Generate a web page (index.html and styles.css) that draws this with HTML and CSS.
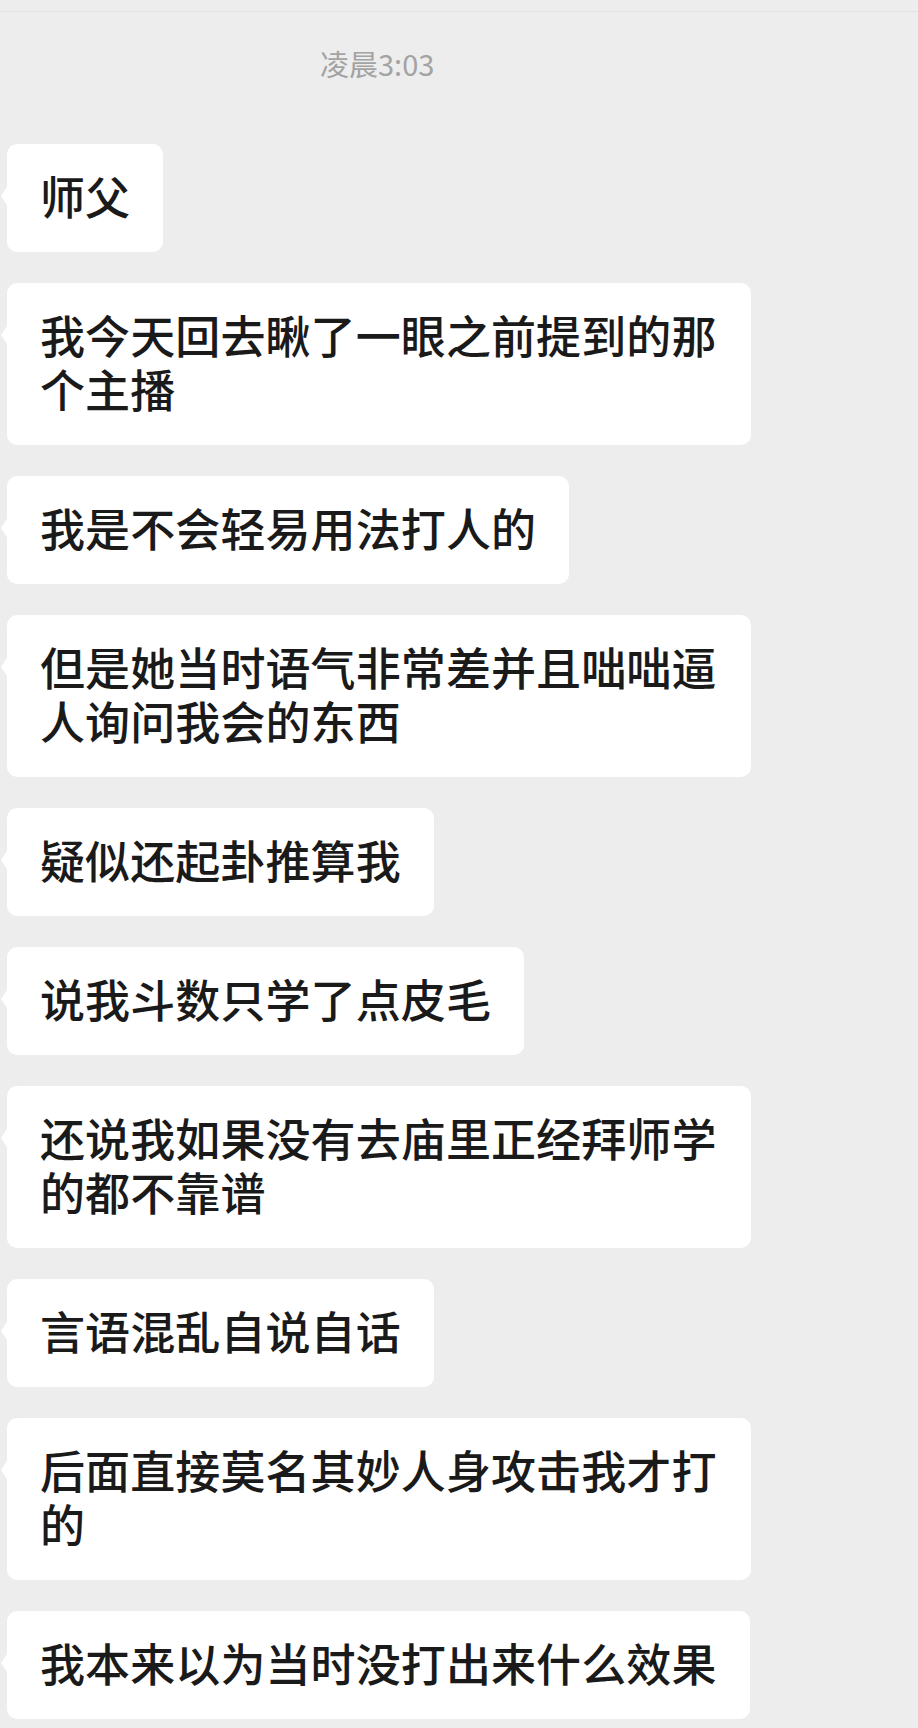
FILE: index.html
```html
<!DOCTYPE html>
<html lang="zh-CN">
<head>
  <meta charset="UTF-8" />
  <meta name="viewport" content="width=device-width, initial-scale=1.0"/>
  <title>聊天记录</title>
  <link rel="stylesheet" href="styles.css">
</head>
<body>

  <div class="top-bar"></div>

  <div class="time">凌晨3:03</div>

  <div class="chat">
    <div class="bubble">师父</div>
    <div class="bubble">我今天回去瞅了一眼之前提到的那个主播</div>
    <div class="bubble">我是不会轻易用法打人的</div>
    <div class="bubble">但是她当时语气非常差并且咄咄逼人询问我会的东西</div>
    <div class="bubble">疑似还起卦推算我</div>
    <div class="bubble">说我斗数只学了点皮毛</div>
    <div class="bubble">还说我如果没有去庙里正经拜师学的都不靠谱</div>
    <div class="bubble">言语混乱自说自话</div>
    <div class="bubble">后面直接莫名其妙人身攻击我才打的</div>
    <div class="bubble">我本来以为当时没打出来什么效果</div>
  </div>

</body>
</html>
```

FILE: styles.css
```css
body {
  font-family: "Noto Sans CJK SC", "Noto Sans", sans-serif;
  background-color: #ededed;
  color: #1a1a1a;
  margin: 0;
  padding: 0;
}

.top-bar {
  height: 11px;
  border-bottom: 1px solid #e2e2e2;
}

.time {
  margin-top: 31px;
  padding-left: 320px;
  font-size: 29px;
  line-height: 40px;
  color: #a3a3a3;
}

.chat {
  display: flex;
  flex-direction: column;
  align-items: flex-start;
  gap: 31px;
  padding: 61px 0 0 7px;
}

.bubble {
  position: relative;
  box-sizing: border-box;
  max-width: 744px;
  background: white;
  border-radius: 10px;
  padding: 25px 33px 29px;
  font-size: 45px;
  font-weight: 500;
  line-height: 54px;
  letter-spacing: 0.1px;
}

/* little tail on the left, mostly cut by the screen edge */
.bubble::before {
  content: "";
  position: absolute;
  left: -6px;
  top: 43px;
  border-top: 9px solid transparent;
  border-bottom: 9px solid transparent;
  border-right: 6px solid white;
}
```
